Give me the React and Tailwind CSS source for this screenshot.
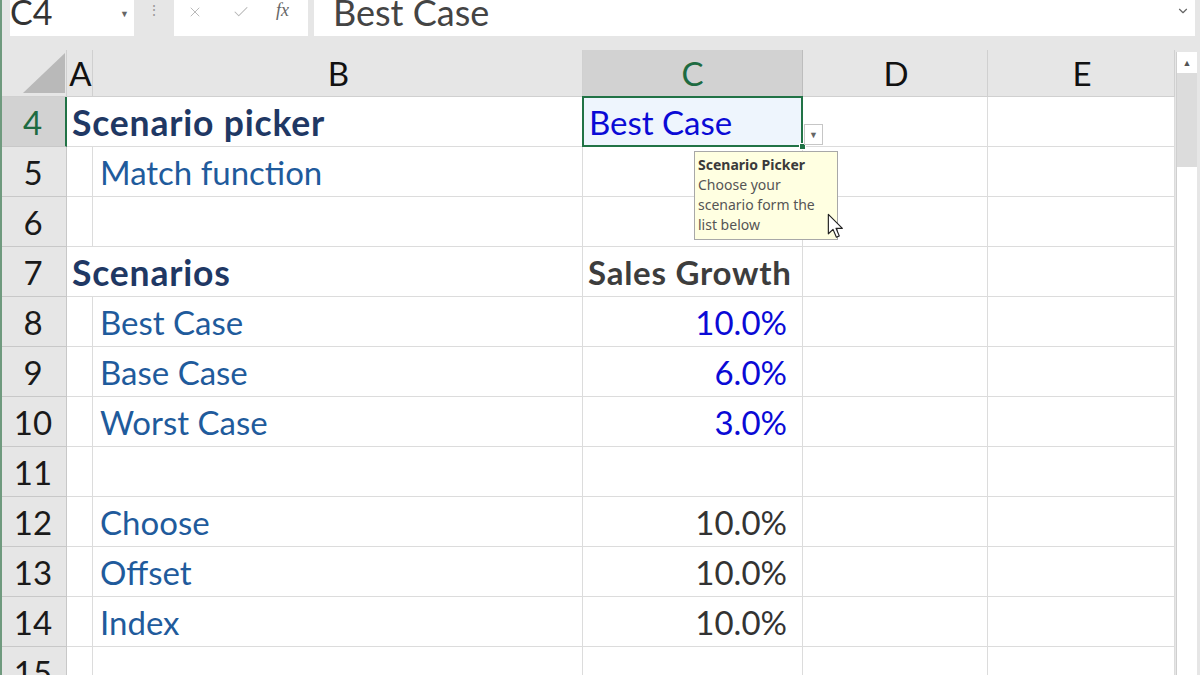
import { X, Check, ChevronDown } from "lucide-react";

const FONT = { fontFamily: "Lato, 'Liberation Sans', sans-serif" };

const rows = [
  { n: 4, a: "Scenario picker", c: "Best Case", sel: true },
  { n: 5, b: "Match function" },
  { n: 6 },
  { n: 7, a: "Scenarios", c: "Sales Growth", head: true },
  { n: 8, b: "Best Case", c: "10.0%", input: true },
  { n: 9, b: "Base Case", c: "6.0%", input: true },
  { n: 10, b: "Worst Case", c: "3.0%", input: true },
  { n: 11 },
  { n: 12, b: "Choose", c: "10.0%" },
  { n: 13, b: "Offset", c: "10.0%" },
  { n: 14, b: "Index", c: "10.0%" },
  { n: 15 },
];

function FormulaBar() {
  return (
    <div className="h-[50px] shrink-0 bg-[#e6e6e6] flex items-start pl-2 pr-[5px]">
      <div className="w-[124px] h-[36px] bg-white relative overflow-hidden">
        <span className="block -mt-[5px] text-[34px] leading-none text-[#333]">C4</span>
        <span className="absolute left-[110px] top-[7px] text-[9px] text-[#666]">▼</span>
      </div>
      <div className="w-[40px] h-[36px] flex items-start justify-center pt-[3px] text-[#999] text-[14px] leading-none">
        <span>⋮</span>
      </div>
      <div className="w-[134px] h-[36px] bg-white flex items-start pt-[4px]">
        <X size={16} strokeWidth={1.4} className="text-[#b5b5b5] ml-[13px]" />
        <Check size={18} strokeWidth={1.4} className="text-[#b5b5b5] ml-[29px] -mt-[1px]" />
        <span
          className="ml-[26px] -mt-[3px] italic text-[18px] text-[#666] leading-none"
          style={{ fontFamily: "'Liberation Serif', serif" }}
        >
          fx
        </span>
      </div>
      <div className="ml-[6px] flex-1 h-[36px] bg-white relative overflow-hidden">
        <span className="block -mt-[6px] ml-[19px] text-[36px] leading-none text-[#444]">Best Case</span>
        <ChevronDown size={14} strokeWidth={2} className="absolute right-[5px] top-[4px] text-[#666]" />
      </div>
    </div>
  );
}

function HeaderRow() {
  const cols = [
    { k: "A", w: "w-[26px]" },
    { k: "B", w: "w-[490px]" },
    { k: "C", w: "w-[220px]", sel: true },
    { k: "D", w: "w-[185px]" },
    { k: "E", w: "w-[187px]" },
  ];
  return (
    <div className="flex h-[47px] shrink-0">
      <div className="w-[67px] shrink-0 bg-[#e6e6e6] border-r border-b border-[#d0d0d0] relative">
        <svg className="absolute left-0 top-0" width="67" height="47" viewBox="0 0 67 47">
          <polygon points="23,43 65,43 65,3" fill="#b9b9b9" />
        </svg>
      </div>
      {cols.map((c) => (
        <div
          key={c.k}
          className={
            c.sel
              ? `${c.w} shrink-0 bg-[#d2d2d2] text-[#1e6b41] border-r border-b border-[#bdbdbd] text-center text-[33px] leading-[46px]`
              : `${c.w} shrink-0 bg-[#e6e6e6] text-[#111] border-r border-b border-[#d0d0d0] text-center text-[33px] leading-[46px] pl-[2px]`
          }
        >
          {c.k}
        </div>
      ))}
    </div>
  );
}

function Cell({ w, children, className = "", noRight }) {
  return (
    <div
      className={
        noRight
          ? `${w} shrink-0 h-[50px] border-b border-[#dcdcdc] pt-[2px] leading-[47px] text-[33px] whitespace-nowrap relative ${className}`
          : `${w} shrink-0 h-[50px] border-r border-b border-[#dcdcdc] pt-[2px] leading-[47px] text-[33px] whitespace-nowrap relative ${className}`
      }
    >
      {children}
    </div>
  );
}

function Tip() {
  return (
    <>
      <div className="absolute -right-[21px] bottom-[1px] w-[19px] h-[21px] bg-white border border-[#c6c6c6] flex items-center justify-center z-10">
        <span className="text-[9px] leading-none text-[#666]">▼</span>
      </div>
      <div
        className="absolute left-[111px] top-[54px] w-[144px] h-[89px] bg-[#ffffe1] border border-[#a8a8a8] z-20 px-[3px] pt-[3px] text-[14px] leading-[20px] text-[#555] whitespace-normal"
        style={{ fontFamily: "'Noto Sans', 'Open Sans', sans-serif" }}
      >
        <div className="font-bold text-[#3a3a3a]">Scenario Picker</div>
        <div>Choose your</div>
        <div>scenario form the</div>
        <div>list below</div>
      </div>
      <svg className="absolute left-[244px] top-[116px] z-30" width="17" height="26" viewBox="0 0 13 20">
        <path d="M1 1 L1 16 L4.6 12.6 L7.2 18.6 L9.4 17.6 L6.9 11.8 L11.8 11.8 Z" fill="#fff" stroke="#222" strokeWidth="0.9" strokeLinejoin="round" />
      </svg>
    </>
  );
}

function GridRow({ r }) {
  const hasA = Boolean(r.a);
  return (
    <div className="flex">
      <div
        className={
          r.sel
            ? "w-[67px] shrink-0 h-[50px] bg-[#d2d2d2] text-[#1e6b41] border-r-2 border-r-[#217346] border-b border-b-[#c8c8c8] text-center text-[33px] pt-[2px] leading-[47px]"
            : "w-[67px] shrink-0 h-[50px] bg-[#e6e6e6] text-[#1a1a1a] border-r border-b border-[#c8c8c8] text-center text-[33px] pt-[2px] leading-[47px]"
        }
      >
        {r.n}
      </div>
      <Cell w="w-[26px]" noRight={hasA}>
        {hasA && (
          <span className="absolute left-[5px] top-[1px] font-bold text-[35.5px] leading-[49px] tracking-[0.8px] text-[#1f3864] z-[1]">
            {r.a}
          </span>
        )}
      </Cell>
      <Cell w="w-[490px]">
        {r.b && <span className="pl-[7px] text-[#1f5b9c]">{r.b}</span>}
      </Cell>
      <Cell
        w="w-[220px]"
        className={
          r.sel
            ? "bg-[#eef5fd] text-[#0a0ad6] pl-[6px]"
            : r.head
            ? "font-bold text-[#3d3d3d] pl-[5px] tracking-[0.75px]"
            : r.input
            ? "text-right pr-[15px] text-[#0a0ad6]"
            : "text-right pr-[15px] text-[#333]"
        }
      >
        {r.c}
        {r.sel && (
          <>
            <div className="absolute -left-[1px] -top-[1px] -right-[1px] -bottom-[1px] border-2 border-[#217346] pointer-events-none" />
            <div className="absolute -right-[4px] -bottom-[4px] w-[7px] h-[7px] bg-[#217346] border border-white z-10" />
            <Tip />
          </>
        )}
      </Cell>
      <Cell w="w-[185px]" />
      <Cell w="w-[187px]" />
    </div>
  );
}

function Scrollbar() {
  return (
    <div className="w-[25px] shrink-0 bg-[#e6e6e6] flex flex-col pt-[2px] pl-[1px] pr-[3px]">
      <div className="h-[21px] bg-white flex items-center justify-center border-l border-[#cfcfcf]">
        <span className="text-[9px] leading-none text-[#555]">▲</span>
      </div>
      <div className="h-[94px] bg-[#dcdcdc] border-l border-[#cfcfcf]" />
      <div className="flex-1 bg-white border-l border-[#cfcfcf]" />
    </div>
  );
}

export default function App() {
  return (
    <div className="w-[1200px] h-[675px] overflow-hidden bg-white flex flex-col border-l-2 border-[#6f9a7e]" style={FONT}>
      <FormulaBar />
      <div className="flex flex-1 min-h-0 -ml-[2px]">
        <div className="w-[1175px] shrink-0 flex flex-col">
          <HeaderRow />
          {rows.map((r) => (
            <GridRow key={r.n} r={r} />
          ))}
        </div>
        <Scrollbar />
      </div>
    </div>
  );
}
